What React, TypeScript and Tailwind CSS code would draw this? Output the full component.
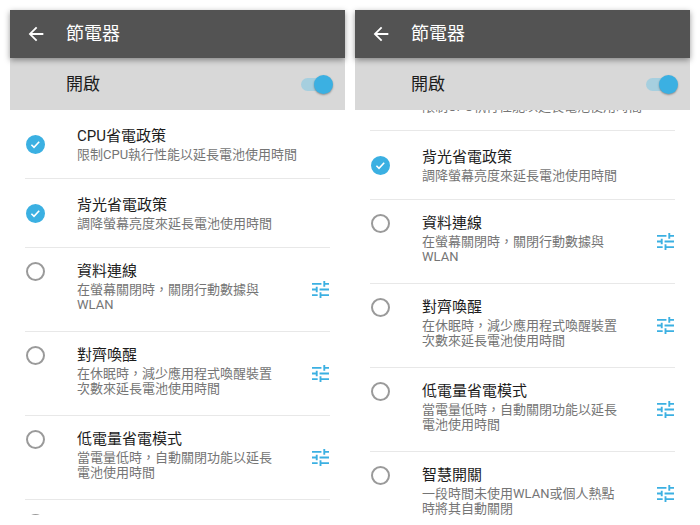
import { useLayoutEffect, useRef } from "react";
import { MdArrowBack } from "react-icons/md";

type Option = {
  id: string;
  title: string;
  summary: string;
  checked?: boolean;
  adjustable?: boolean;
};

const options: Option[] = [
  {
    id: "cpu",
    title: "CPU省電政策",
    summary: "限制CPU執行性能以延長電池使用時間",
    checked: true,
  },
  {
    id: "backlight",
    title: "背光省電政策",
    summary: "調降螢幕亮度來延長電池使用時間",
    checked: true,
  },
  {
    id: "data",
    title: "資料連線",
    summary: "在螢幕關閉時，關閉行動數據與WLAN",
    adjustable: true,
  },
  {
    id: "wakeup",
    title: "對齊喚醒",
    summary: "在休眠時，減少應用程式喚醒裝置次數來延長電池使用時間",
    adjustable: true,
  },
  {
    id: "low-battery",
    title: "低電量省電模式",
    summary: "當電量低時，自動關閉功能以延長電池使用時間",
    adjustable: true,
  },
  {
    id: "smart",
    title: "智慧開關",
    summary: "一段時間未使用WLAN或個人熱點時將其自動關閉",
    adjustable: true,
  },
];

function TuneIcon() {
  return (
    <svg viewBox="3 3 18 18" className="size-[17px]" fill="currentColor" aria-hidden="true">
      <path d="M3 17v2h6v-2H3zM3 5v2h10V5H3zm10 16v-2h8v-2h-8v-2h-2v6h2zM7 9v2H3v2h4v2h2V9H7zm14 4v-2H11v2h10zm-6-4h2V7h4V5h-4V3h-2v6z" />
    </svg>
  );
}

function RoundCheck({ id, checked }: { id: string; checked?: boolean }) {
  return (
    <span className="grid size-[19px] shrink-0 place-items-center">
      <input
        id={id}
        type="checkbox"
        defaultChecked={checked}
        className="peer col-start-1 row-start-1 size-[19px] appearance-none rounded-full border-2 border-[#9a9a9a] checked:border-[#3bb0e2] checked:bg-[#3bb0e2]"
      />
      <svg
        viewBox="0 0 19 19"
        className="pointer-events-none invisible col-start-1 row-start-1 size-[19px] peer-checked:visible"
        fill="none"
        stroke="white"
        strokeWidth="1.6"
        aria-hidden="true"
      >
        <path d="M5.4 9.8l2.6 2.6 5.2-5.6" />
      </svg>
    </span>
  );
}

function Switch({ id }: { id: string }) {
  return (
    <span className="grid w-8 items-center">
      <input
        id={id}
        type="checkbox"
        role="switch"
        defaultChecked
        className="peer col-start-1 row-start-1 h-[13px] w-7 appearance-none rounded-full bg-[#b0b0b0] checked:bg-[#a6cfdf]"
      />
      <span className="pointer-events-none col-start-1 row-start-1 size-[19px] rounded-full bg-white shadow-[0_1px_2px_rgba(0,0,0,0.35)] peer-checked:justify-self-end peer-checked:bg-[#3bb0e2]" />
    </span>
  );
}

function OptionRow({ option, prefix }: { option: Option; prefix: string }) {
  const id = `${prefix}-${option.id}`;

  return (
    <li
      className={
        option.adjustable
          ? "flex h-[84px] shrink-0 items-start border-b border-[#e8e8e8] px-px pt-[14px]"
          : "flex h-[69px] shrink-0 items-center border-b border-[#e8e8e8] px-px"
      }
    >
      <RoundCheck id={id} checked={option.checked} />
      <label htmlFor={id} className="ml-8 min-w-0 flex-1">
        <span className="block text-[15px] leading-[18px] text-[#1c1c1c]">{option.title}</span>
        <span className="mt-0.5 block text-[13px] leading-[15px] text-[#757575]">
          {option.summary}
        </span>
      </label>
      {option.adjustable && (
        <button
          type="button"
          aria-label={`${option.title}設定`}
          className="mb-[14px] ml-9 shrink-0 self-center text-[#3bb0e2]"
        >
          <TuneIcon />
        </button>
      )}
    </li>
  );
}

function PowerSaver({ prefix, scroll = 0 }: { prefix: string; scroll?: number }) {
  const listRef = useRef<HTMLUListElement>(null);

  useLayoutEffect(() => {
    if (listRef.current) listRef.current.scrollTop = scroll;
  }, [scroll]);

  return (
    <section className="flex min-h-0 flex-col">
      <header className="z-10 flex h-12 shrink-0 items-center bg-[#535353] px-[15px] text-white shadow-[0_2px_6px_rgba(0,0,0,0.4)]">
        <button type="button" aria-label="返回">
          <MdArrowBack className="size-[22px]" />
        </button>
        <h1 className="ml-[19px] text-lg leading-6">節電器</h1>
      </header>
      <div className="flex h-[52px] shrink-0 items-center justify-between bg-[#d8d8d8] pr-3 pl-14">
        <label htmlFor={`${prefix}-enabled`} className="text-[17px] leading-6 text-[#1c1c1c]">
          開啟
        </label>
        <Switch id={`${prefix}-enabled`} />
      </div>
      <ul
        ref={listRef}
        className="flex min-h-0 flex-1 flex-col overflow-y-auto px-[15px] [scrollbar-width:none]"
      >
        {options.map((option) => (
          <OptionRow key={option.id} option={option} prefix={prefix} />
        ))}
      </ul>
    </section>
  );
}

export default function App() {
  return (
    <main className="grid h-screen grid-cols-2 grid-rows-1 gap-[10px] overflow-hidden bg-white p-[10px] font-[Roboto,'Noto_Sans_CJK_TC',sans-serif]">
      <PowerSaver prefix="top" />
      <PowerSaver prefix="scrolled" scroll={48} />
    </main>
  );
}
